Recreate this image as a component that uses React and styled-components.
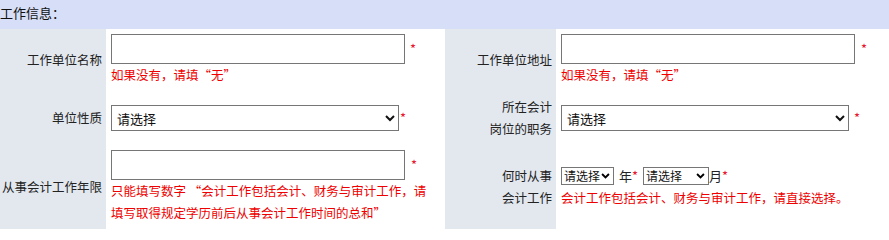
import styled, { createGlobalStyle } from 'styled-components';

const GlobalStyle = createGlobalStyle`
  body {
    margin: 0;
    background: #fff;
    font-family: "Noto Sans CJK SC", "Liberation Sans", sans-serif;
    font-size: 12.5px;
    color: #222;
  }
`;

const chevron =
  "url(\"data:image/svg+xml,%3Csvg xmlns='http://www.w3.org/2000/svg' width='10' height='7' viewBox='0 0 10 7'%3E%3Cpath d='M1 1.2 5 5.2 9 1.2' fill='none' stroke='%23000' stroke-width='2.2'/%3E%3C/svg%3E\")";

const App = () => {
  return (
    <>
      <GlobalStyle />
      <Section>
        <Header>工作信息：</Header>

        <Row $h={62}>
          <Label>工作单位名称</Label>
          <Cell>
            <Line>
              <TextInput type='text' />
              <Star $gap={5}>*</Star>
            </Line>
            <Help>如果没有，请填“无”</Help>
          </Cell>
          <Label>工作单位地址</Label>
          <Cell>
            <Line>
              <TextInput type='text' />
              <Star $gap={6}>*</Star>
            </Line>
            <Help>如果没有，请填“无”</Help>
          </Cell>
        </Row>

        <Row $h={54}>
          <Label>单位性质</Label>
          <Cell>
            <Line>
              <Select $w={288}>
                <option>请选择</option>
              </Select>
              <Star>*</Star>
            </Line>
          </Cell>
          <Label>
            所在会计
            <br />
            岗位的职务
          </Label>
          <Cell>
            <Line>
              <Select $w={288}>
                <option>请选择</option>
              </Select>
              <Star $gap={5}>*</Star>
            </Line>
          </Cell>
        </Row>

        <Row $h={84}>
          <Label>从事会计工作年限</Label>
          <Cell>
            <Line>
              <TextInput type='text' />
              <Star $gap={6}>*</Star>
            </Line>
            <Help>
              只能填写数字 “会计工作包括会计、财务与审计工作，请
              <br />
              填写取得规定学历前后从事会计工作时间的总和”
            </Help>
          </Cell>
          <Label>
            何时从事
            <br />
            会计工作
          </Label>
          <Cell>
            <Line>
              <SmallSelect $w={53}>
                <option>请选择</option>
              </SmallSelect>
              <Unit $left={5}>年</Unit>
              <Star $gap={0}>*</Star>
              <SmallSelect $w={66} $left={5}>
                <option>请选择</option>
              </SmallSelect>
              <Unit>月</Unit>
              <Star $gap={0}>*</Star>
            </Line>
            <Help>会计工作包括会计、财务与审计工作，请直接选择。</Help>
          </Cell>
        </Row>
      </Section>
    </>
  );
};

export default App;

const Section = styled.div`
  width: 889px;
  overflow: hidden;
`;

const Header = styled.div`
  height: 29px;
  line-height: 26px;
  background: #d6dff7;
  color: #111;
  font-size: 13px;
`;

const Row = styled.div`
  display: grid;
  grid-template-columns: 106px 339px 111px 333px;
  height: ${(p) => p.$h}px;
`;

const Label = styled.div`
  display: flex;
  align-items: center;
  justify-content: flex-end;
  text-align: right;
  padding-right: 4px;
  line-height: 22px;
  background: #e3e8ef;
  color: #222;
  white-space: nowrap;
`;

const Cell = styled.div`
  display: flex;
  flex-direction: column;
  justify-content: center;
  padding-left: 5px;
  background: #fff;
`;

const Line = styled.div`
  display: flex;
  align-items: center;
  line-height: 22px;
  white-space: nowrap;
`;

const TextInput = styled.input`
  box-sizing: border-box;
  width: 294px;
  height: 30px;
  margin: 0;
  border: 1px solid #767676;
  border-radius: 0;
  padding: 2px 4px;
  font: inherit;
`;

const Select = styled.select`
  box-sizing: border-box;
  width: ${(p) => p.$w}px;
  height: 26px;
  margin: 0 0 0 ${(p) => p.$left || 0}px;
  border: 1px solid #767676;
  border-radius: 0;
  background: #fff;
  color: #111;
  font: inherit;
  font-size: 13px;
  padding: 0 1px;
`;

const SmallSelect = styled(Select)`
  appearance: none;
  height: 18px;
  line-height: 16px;
  font-size: 12px;
  padding: 0 0 0 2px;
  background: #fff ${chevron} no-repeat right 3px center;
  background-size: 9px 6px;
`;

const Star = styled.span`
  color: #e8112d;
  margin-left: ${(p) => (p.$gap === undefined ? 1 : p.$gap)}px;
  font-size: 13px;
  line-height: 22px;
`;

const Unit = styled.span`
  margin-left: ${(p) => p.$left || 0}px;
  color: #222;
  font-size: 13px;
`;

const Help = styled.div`
  color: #e00;
  line-height: 22px;
  white-space: nowrap;
`;
